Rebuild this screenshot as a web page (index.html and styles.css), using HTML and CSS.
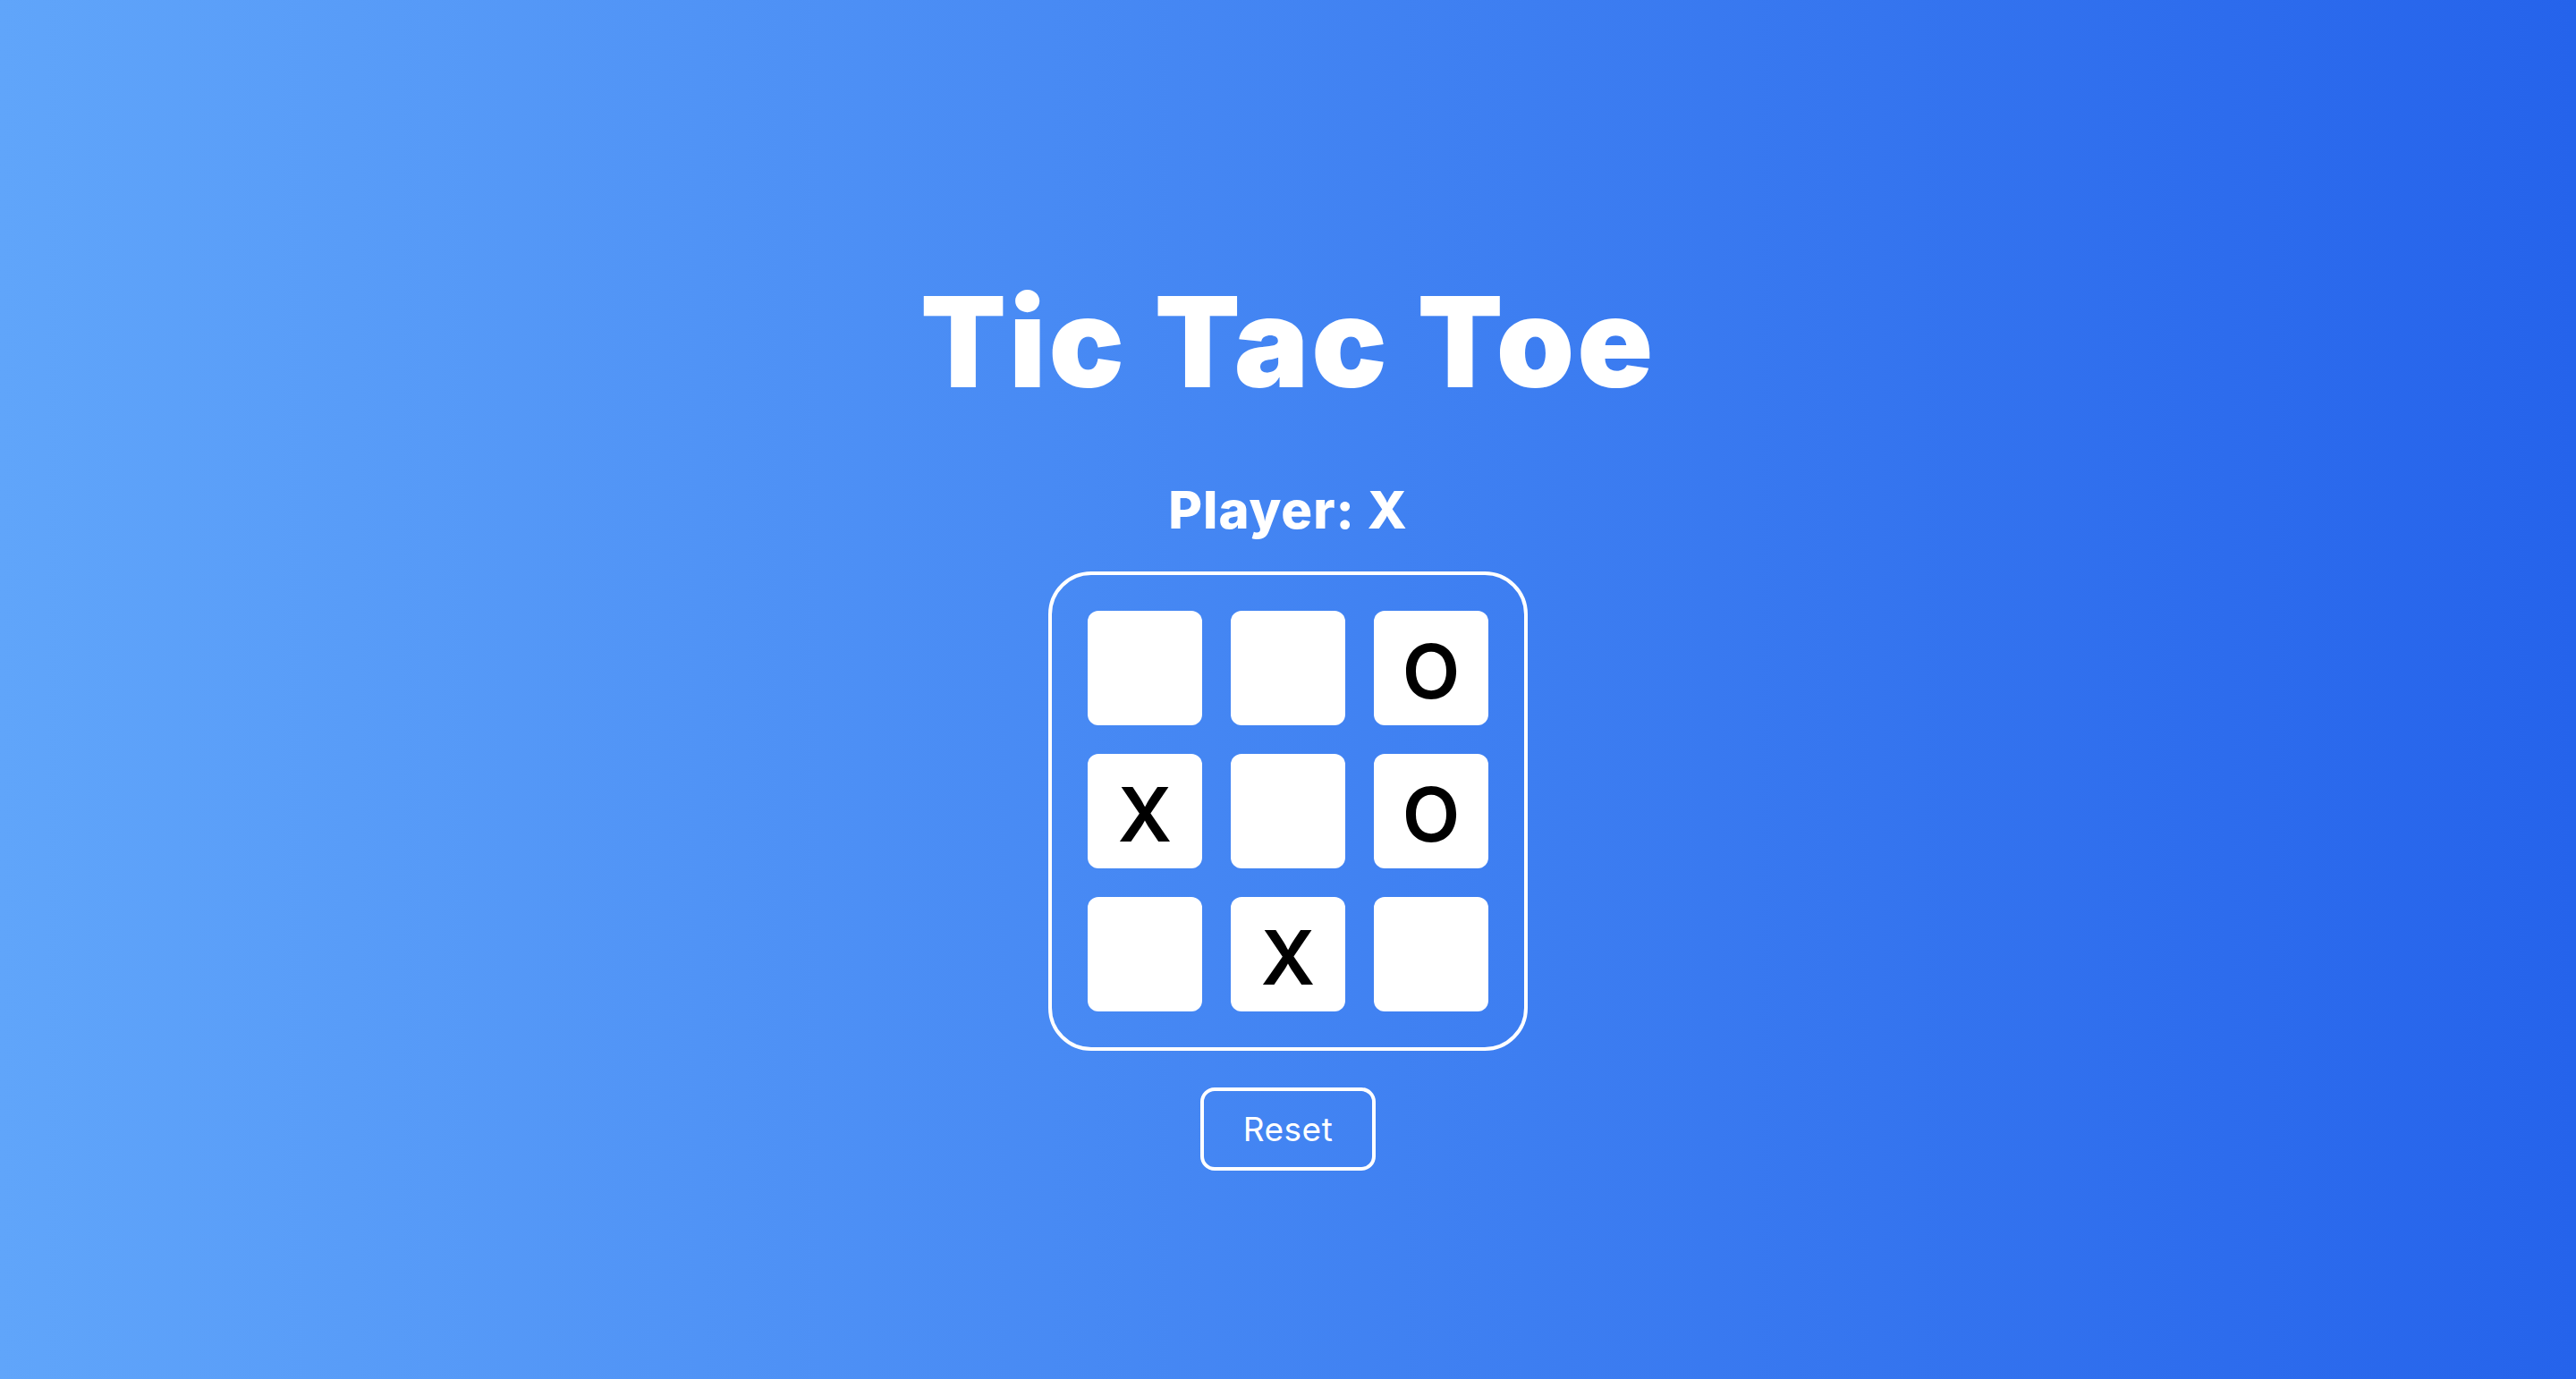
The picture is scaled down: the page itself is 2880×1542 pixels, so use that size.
FILE: index.html
```html
<!DOCTYPE html>
<html lang="en">
<head>
<meta charset="utf-8">
<title>Tic Tac Toe</title>
<link rel="stylesheet" href="styles.css">
</head>
<body>
<main class="game">
  <h1 class="title">Tic Tac Toe</h1>
  <p class="status">Player: X</p>
  <div class="board">
    <button class="cell"></button>
    <button class="cell"></button>
    <button class="cell">O</button>
    <button class="cell">X</button>
    <button class="cell"></button>
    <button class="cell">O</button>
    <button class="cell"></button>
    <button class="cell">X</button>
    <button class="cell"></button>
  </div>
  <button class="reset">Reset</button>
</main>
</body>
</html>
```
FILE: styles.css
```css
html, body {
  margin: 0;
  padding: 0;
}
body {
  min-height: 100vh;
  background: linear-gradient(to right, #60a5fa, #2563eb);
  font-family: "Inter", "Liberation Sans", sans-serif;
  color: #fff;
}
.game {
  display: flex;
  flex-direction: column;
  align-items: center;
  padding-top: 312px;
}
.title {
  margin: 0;
  font-size: 140px;
  line-height: 1;
  font-weight: 900;
  letter-spacing: 3px;
}
.status {
  margin: 89px 0 0;
  font-size: 58px;
  line-height: 1;
  font-weight: 800;
  letter-spacing: 1px;
}
.board {
  margin-top: 40px;
  display: grid;
  grid-template-columns: repeat(3, 128px);
  grid-auto-rows: 128px;
  gap: 32px;
  padding: 40px;
  border: 4px solid #fff;
  border-radius: 48px;
}
.cell {
  display: flex;
  align-items: center;
  justify-content: center;
  padding: 8px 0 0;
  margin: 0;
  border: none;
  border-radius: 12px;
  background: #fff;
  color: #000;
  font-family: "Inter", "Liberation Sans", sans-serif;
  font-size: 84px;
  font-weight: 600;
  line-height: 1;
}
.reset {
  margin-top: 41px;
  padding: 24px 44px;
  border: 4px solid #fff;
  border-radius: 16px;
  background: transparent;
  color: #fff;
  font-family: "Inter", "Liberation Sans", sans-serif;
  font-size: 37px;
  font-weight: 400;
  line-height: 1;
  letter-spacing: 0.5px;
}
```
